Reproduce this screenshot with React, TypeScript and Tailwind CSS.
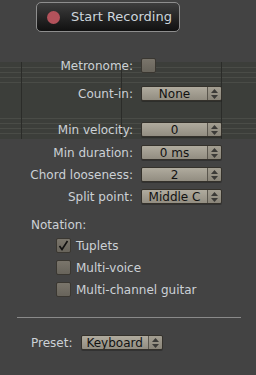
import React from "react";

// Piano-roll style grid that shows faintly behind the top of the form
function GridBackdrop() {
    const hLines = [5, 10, 15, 20, 56, 61, 66, 71];
    const vLines = [21, 121, 221];
    return (
        <svg className="absolute left-0 top-[62px]" width="256" height="77" viewBox="0 0 256 77">
            <rect x="0" y="0" width="256" height="77" fill="#3c3e3a" />
            {hLines.map((y) => (
                <line key={y} x1="0" x2="256" y1={y + 0.5} y2={y + 0.5} stroke="#4a4c47" strokeWidth="1" />
            ))}
            {vLines.map((x) => (
                <line key={x} x1={x + 0.5} x2={x + 0.5} y1="0" y2="77" stroke="#2b2c29" strokeWidth="1" />
            ))}
        </svg>
    );
}

function Stepper() {
    return (
        <div className="w-[14px] h-full flex flex-col items-center justify-center gap-[2px] border-l border-[#5a564d] bg-gradient-to-b from-[#a39e91] to-[#8a8579]">
            <svg width="7" height="4" viewBox="0 0 7 4"><path d="M0 4 L3.5 0 L7 4 Z" fill="#3b3a37" /></svg>
            <svg width="7" height="4" viewBox="0 0 7 4"><path d="M0 0 L3.5 4 L7 0 Z" fill="#3b3a37" /></svg>
        </div>
    );
}

function Select({ value, width = "w-[81px]", align = "center" }: { value: string; width?: string; align?: "center" | "left" }) {
    return (
        <div className={`${width} h-[15px] flex rounded-[2px] border border-[#34312b] overflow-hidden shadow-[0_1px_0_rgba(0,0,0,0.25)]`}>
            <div className={`flex-1 flex items-center ${align === "center" ? "justify-center" : "justify-start pl-[4px]"} bg-gradient-to-b from-[#b0ab9e] to-[#928d81] text-[12px] leading-none text-[#111]`}>
                {value}
            </div>
            <Stepper />
        </div>
    );
}

function Checkbox({ checked = false }: { checked?: boolean }) {
    return (
        <div className="w-[15px] h-[15px] rounded-[2px] border border-[#3a3731] bg-gradient-to-b from-[#7a756b] to-[#68645b] flex items-center justify-center">
            {checked && (
                <svg width="11" height="11" viewBox="0 0 11 11">
                    <path d="M1.5 6 L4 9.5 L9.5 1" fill="none" stroke="#111" strokeWidth="1.6" />
                </svg>
            )}
        </div>
    );
}

function Row({ label, children, className = "" }: { label: string; children: React.ReactNode; className?: string }) {
    return (
        <div className={`flex items-center h-[15px] ${className}`}>
            <div className="w-[133px] text-right text-[12px] text-[#ccd1d6] leading-none">{label}</div>
            <div className="ml-[8px]">{children}</div>
        </div>
    );
}

export default function App() {
    return (
        <div className="relative w-[256px] h-[375px] overflow-hidden bg-[#434343] font-['DejaVu_Sans',sans-serif]">
            <GridBackdrop />

            <div className="relative flex flex-col">
                {/* Record button */}
                <div className="pt-[2px] pl-[36px]">
                    <button className="w-[144px] h-[30px] flex items-center rounded-[5px] border border-[#8e8e8e] bg-gradient-to-b from-[#3e3e3e] to-[#111]">
                        <span className="ml-[10px] w-[13px] h-[13px] rounded-full bg-[#b3525b]" />
                        <span className="ml-[11px] text-[13px] text-[#cdd5dc]">Start Recording</span>
                    </button>
                </div>

                <Row label="Metronome:" className="mt-[26px]">
                    <Checkbox />
                </Row>
                <Row label="Count-in:" className="mt-[13px]">
                    <Select value="None" />
                </Row>

                <Row label="Min velocity:" className="mt-[21px]">
                    <Select value="0" />
                </Row>
                <Row label="Min duration:" className="mt-[8px]">
                    <Select value="0 ms" />
                </Row>
                <Row label="Chord looseness:" className="mt-[7px]">
                    <Select value="2" />
                </Row>
                <Row label="Split point:" className="mt-[7px]">
                    <Select value="Middle C" />
                </Row>

                {/* Notation options */}
                <div className="mt-[15px] pl-[31px] text-[12px] leading-none text-[#ccd1d6]">Notation:</div>
                <div className="mt-[7px] pl-[56px] flex flex-col gap-[7px] text-[12px] text-[#ccd1d6]">
                    <label className="flex items-center gap-[5px] h-[15px]"><Checkbox checked /> Tuplets</label>
                    <label className="flex items-center gap-[5px] h-[15px]"><Checkbox /> Multi-voice</label>
                    <label className="flex items-center gap-[5px] h-[15px]"><Checkbox /> Multi-channel guitar</label>
                </div>

                <div className="mt-[20px] mx-[17px] w-[224px] h-[1px] bg-[#8a8a8a]" />

                <div className="mt-[17px] pl-[31px] flex items-center h-[15px]">
                    <span className="text-[12px] leading-none text-[#ccd1d6]">Preset:</span>
                    <div className="ml-[9px]">
                        <Select value="Keyboard" width="w-[82px]" align="left" />
                    </div>
                </div>
            </div>
        </div>
    );
}
